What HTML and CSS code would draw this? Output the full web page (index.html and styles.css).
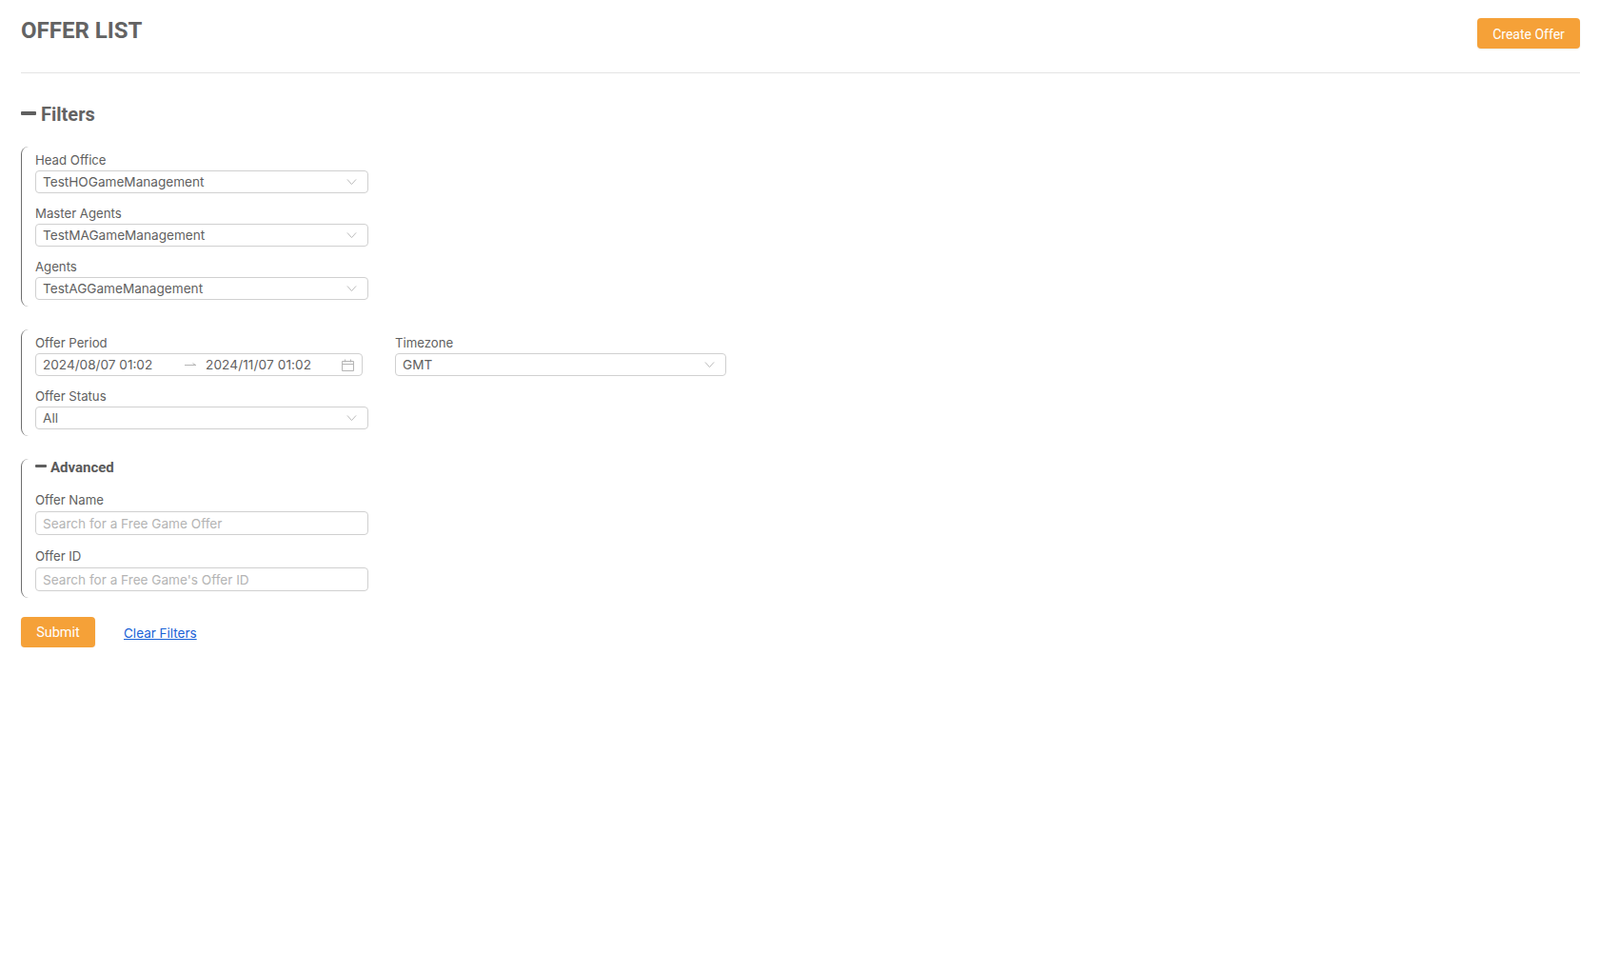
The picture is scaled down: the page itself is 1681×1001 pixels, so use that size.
FILE: index.html
```html
<!DOCTYPE html>
<html lang="en">
<head>
<meta charset="UTF-8">
<meta name="viewport" content="width=device-width, initial-scale=1.0">
<title>Offer List</title>
<link rel="stylesheet" href="styles.css">
</head>
<body>
<div class="page">
    <div class="page-header">
        <h1>OFFER LIST</h1>
        <button type="button" class="btn btn-create">Create Offer</button>
    </div>

    <h2 class="filters-title"><span class="minus"></span>Filters</h2>

    <div class="group group-agents">
        <div class="field">
            <label>Head Office</label>
            <div class="select"><span>TestHOGameManagement</span>
                <svg class="chevron" viewBox="0 0 12 8"><path d="M1 1.2 6 6.8 11 1.2"/></svg>
            </div>
        </div>
        <div class="field">
            <label>Master Agents</label>
            <div class="select"><span>TestMAGameManagement</span>
                <svg class="chevron" viewBox="0 0 12 8"><path d="M1 1.2 6 6.8 11 1.2"/></svg>
            </div>
        </div>
        <div class="field">
            <label>Agents</label>
            <div class="select"><span>TestAGGameManagement</span>
                <svg class="chevron" viewBox="0 0 12 8"><path d="M1 1.2 6 6.8 11 1.2"/></svg>
            </div>
        </div>
    </div>

    <div class="group group-period">
        <div class="row">
            <div class="field field-period">
                <label>Offer Period</label>
                <div class="select range">
                    <span class="range-from">2024/08/07 01:02</span>
                    <svg class="arrow" viewBox="0 0 12 6"><path d="M0 3.5H12M8.5 1.5 11.5 3.5"/></svg>
                    <span class="range-to">2024/11/07 01:02</span>
                    <svg class="calendar" viewBox="0 0 13 13"><path d="M.5 2.5H12.5V12.5H.5ZM.5 5.5H12.5M3.5 .5V3.5M9.5 .5V3.5"/></svg>
                </div>
            </div>
            <div class="field field-zone">
                <label>Timezone</label>
                <div class="select"><span>GMT</span>
                    <svg class="chevron" viewBox="0 0 12 8"><path d="M1 1.2 6 6.8 11 1.2"/></svg>
                </div>
            </div>
        </div>
        <div class="field">
            <label>Offer Status</label>
            <div class="select"><span>All</span>
                <svg class="chevron" viewBox="0 0 12 8"><path d="M1 1.2 6 6.8 11 1.2"/></svg>
            </div>
        </div>
    </div>

    <div class="group group-advanced">
        <h3 class="advanced-title"><span class="minus minus-small"></span>Advanced</h3>
        <div class="field field-input">
            <label for="offerName">Offer Name</label>
            <input type="text" id="offerName" placeholder="Search for a Free Game Offer">
        </div>
        <div class="field field-input">
            <label for="offerId">Offer ID</label>
            <input type="text" id="offerId" placeholder="Search for a Free Game's Offer ID">
        </div>
    </div>

    <div class="actions">
        <button type="button" class="btn btn-submit">Submit</button>
        <a href="#" class="clear-link">Clear Filters</a>
    </div>
</div>
</body>
</html>
```

FILE: styles.css
```css
* {
    box-sizing: border-box;
}

body {
    margin: 0;
    background-color: #ffffff;
    color: #5f5f5f;
    font-family: Inter, Roboto, sans-serif;
    font-size: 13.6px;
}

.page {
    padding: 0 21px 0 22px;
}

.page-header {
    display: flex;
    justify-content: space-between;
    height: 77px;
    padding-top: 19px;
    border-bottom: 1px solid #e4e4e4;
}

h1 {
    margin: 0;
    color: #636363;
    font-family: Roboto, sans-serif;
    font-size: 24px;
    font-weight: 700;
    line-height: 26px;
}

.btn {
    border: none;
    border-radius: 4px;
    background-color: #f5a138;
    color: #ffffff;
    font-family: Roboto, sans-serif;
    font-size: 14px;
    font-weight: 400;
    box-shadow: 0 1px 2px rgba(0, 0, 0, 0.08);
    cursor: pointer;
}

.btn-create {
    width: 108px;
    height: 32px;
    padding: 1px 0 0;
}

.filters-title {
    display: flex;
    align-items: center;
    gap: 5px;
    height: 24px;
    margin: 31px 0 22px;
    color: #636363;
    font-family: Roboto, sans-serif;
    font-size: 20px;
    font-weight: 700;
}

.minus {
    width: 16px;
    height: 4px;
    margin-top: -3px;
    border-radius: 1px;
    background-color: #5f5f5f;
}

.minus-small {
    width: 12px;
    height: 3px;
}

.group {
    width: 365px;
    margin-bottom: 24px;
    padding-left: 14px;
    border-left: 1px solid #6e6e6e;
    border-radius: 8px 0 0 8px;
}

.group-agents {
    height: 168px;
    padding-top: 5px;
}

.group-period {
    width: 742px;
    height: 112px;
    padding-top: 5px;
}

.group-advanced {
    height: 146px;
    margin-bottom: 20px;
}

.field {
    width: 350px;
    margin-bottom: 12px;
}

label {
    display: block;
    height: 19px;
    margin-bottom: 1px;
    color: #5f5f5f;
    font-size: 13.2px;
    line-height: 19px;
}

.select {
    display: flex;
    align-items: center;
    justify-content: space-between;
    height: 24px;
    padding: 0 11px 0 7px;
    border: 1px solid #d0d0d0;
    border-radius: 4px;
    background-color: #ffffff;
}

.chevron {
    width: 11px;
    height: 8px;
    fill: none;
    stroke: #b5b5b5;
    stroke-width: 1;
}

.row {
    display: flex;
    gap: 34px;
}

.field-period {
    width: 344px;
}

.field-zone {
    width: 348px;
}

.range {
    justify-content: flex-start;
    padding-right: 8px;
}

.range-from {
    width: 149px;
}

.arrow {
    width: 12px;
    height: 6px;
    fill: none;
    stroke: #b5b5b5;
    stroke-width: 1;
}

.range-to {
    flex: 1;
    margin-left: 10px;
    letter-spacing: 0.12px;
}

.calendar {
    width: 13px;
    height: 13px;
    fill: none;
    stroke: #b5b5b5;
    stroke-width: 1;
}

.advanced-title {
    display: flex;
    align-items: center;
    gap: 4px;
    height: 18px;
    margin: 0 0 16px;
    color: #5a5a5a;
    font-family: Roboto, sans-serif;
    font-size: 15px;
    font-weight: 700;
}

.field-input label {
    margin-bottom: 2px;
}

.field-input {
    margin-bottom: 13px;
}

input[type="text"] {
    display: block;
    width: 100%;
    height: 25px;
    padding: 0 7px;
    border: 1px solid #d0d0d0;
    border-radius: 4px;
    color: #5f5f5f;
    font-family: Inter, Roboto, sans-serif;
    font-size: 13.6px;
}

input::placeholder {
    color: #b4b4b4;
    opacity: 1;
}

.actions {
    display: flex;
    align-items: center;
    gap: 30px;
}

.btn-submit {
    width: 78px;
    height: 32px;
    padding: 1px 0 0;
    font-size: 14.5px;
}

.clear-link {
    margin-top: 1px;
    color: #1a62d6;
    font-size: 13.5px;
}
```
